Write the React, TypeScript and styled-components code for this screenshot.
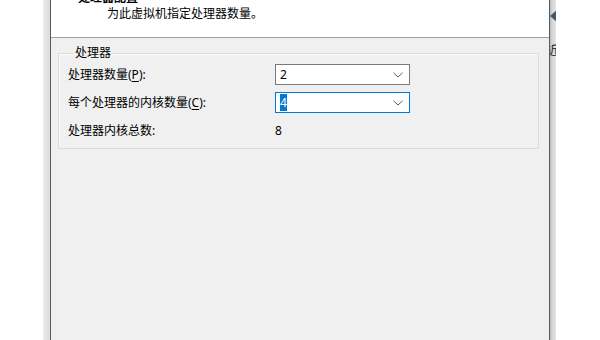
import styled, { createGlobalStyle } from "styled-components";

const Global = createGlobalStyle`
    html, body { margin: 0; padding: 0; background: #fff; overflow: hidden; }
    body { font-family: "Segoe UI", "Noto Sans", "Noto Sans CJK SC", sans-serif; font-size: 12px; color: #000; }
`;

const Page = styled.div`
    display: flex;
    width: 600px;
    height: 340px;
    overflow: hidden;
`;

const Gap = styled.div`
    width: 43px;
    flex: none;
`;

const Shade = styled.div<{ $side: "left" | "right" }>`
    width: ${p => (p.$side === "left" ? 7 : 6)}px;
    flex: none;
    overflow: hidden;
    background: ${p => p.$side === "left"
        ? "linear-gradient(to right, #ececec, #dcdcdc)"
        : "linear-gradient(to right, #bdbdbd, #d6d6d6 40%, #e4e4e4)"};
    display: flex;
    flex-direction: column;
`;

const BehindIcon = styled.svg`
    display: block;
    margin: 10px 0 0 0;
    flex: none;
`;

const BehindText = styled.span`
    margin: 22px 0 0 -3px;
    font-size: 12px;
    line-height: 14px;
    white-space: nowrap;
    color: #1a1a1a;
`;

const Window = styled.div`
    width: 498px;
    flex: none;
    border-left: 1px solid #5a5a5a;
    border-right: 1px solid #5a5a5a;
    background: #f0f0f0;
    display: flex;
    flex-direction: column;
`;

const Header = styled.div`
    background: #fff;
    height: 37px;
    border-bottom: 1px solid #a0a0a0;
    display: flex;
    flex-direction: column;
`;

const Title = styled.div`
    margin-top: -10px;
    padding-left: 27px;
    font-weight: bold;
    line-height: 16px;
`;

const Subtitle = styled.div`
    padding-left: 56px;
    line-height: 16px;
`;

const Body = styled.div`
    padding: 8px 10px 0 7px;
`;

const Group = styled.fieldset`
    margin: 0;
    padding: 4px 0 7px 9px;
    border: 1px solid #dcdcdc;
    box-shadow: inset 1px 1px 0 #fafafa;
`;

const Legend = styled.legend`
    margin-left: 6px;
    padding: 0 1px;
    line-height: 14px;
`;

const Grid = styled.div`
    display: grid;
    grid-template-columns: 207px 135px;
    grid-auto-rows: 21px;
    row-gap: 7px;
    align-items: center;
`;

const Label = styled.span`
    line-height: 16px;
    white-space: nowrap;
    & u { text-decoration-thickness: 1px; text-underline-offset: 2px; }
`;

const Combo = styled.div<{ $focus?: boolean }>`
    box-sizing: border-box;
    height: 21px;
    border: 1px solid ${p => (p.$focus ? "#0078d7" : "#7a7a7a")};
    background: #fff;
    display: flex;
    align-items: center;
    padding: 0 6px 0 4px;
`;

const ComboValue = styled.span<{ $selected?: boolean }>`
    flex: 1;
    line-height: 15px;
    & b {
        font-weight: normal;
        ${p => p.$selected && "background: #0078d7; color: #fff; padding: 0 0 0 0;"}
    }
`;

const Value = styled.span`
    line-height: 16px;
`;

function Chevron() {
    return (
        <svg width="10" height="6" viewBox="0 0 10 6">
            <path d="M0.5 0.8 L5 5 L9.5 0.8" fill="none" stroke="#5f5f5f" strokeWidth="1" />
        </svg>
    );
}

export default function App() {
    return (
        <Page>
            <Global />
            <Gap />
            <Shade $side="left" />
            <Window>
                <Header>
                    <Title>处理器配置</Title>
                    <Subtitle>为此虚拟机指定处理器数量。</Subtitle>
                </Header>
                <Body>
                    <Group>
                        <Legend>处理器</Legend>
                        <Grid>
                            <Label>处理器数量(<u>P</u>):</Label>
                            <Combo>
                                <ComboValue><b>2</b></ComboValue>
                                <Chevron />
                            </Combo>
                            <Label>每个处理器的内核数量(<u>C</u>):</Label>
                            <Combo $focus>
                                <ComboValue $selected><b>4</b></ComboValue>
                                <Chevron />
                            </Combo>
                            <Label>处理器内核总数:</Label>
                            <Value>8</Value>
                        </Grid>
                    </Group>
                </Body>
            </Window>
            <Shade $side="right">
                <BehindIcon width="7" height="12" viewBox="0 0 7 12">
                    <polygon points="0,6 7,0 7,12" fill="#3f5870" />
                </BehindIcon>
                <BehindText>近</BehindText>
            </Shade>
        </Page>
    );
}
